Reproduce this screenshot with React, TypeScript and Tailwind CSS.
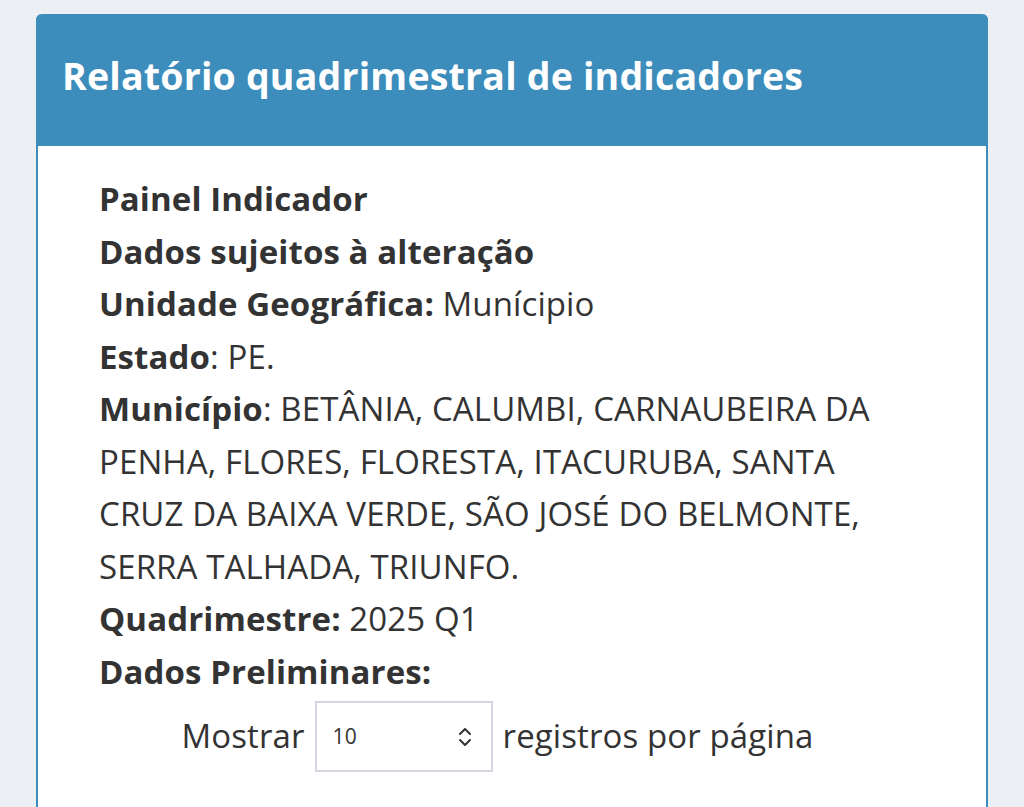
export default function App() {
  return (
    <div className="min-h-[807px] bg-[#ecf0f5] pt-[14px] pl-[36px] pr-[36px]" style={{ fontFamily: '"Open Sans", "Liberation Sans", sans-serif' }}>
      <div className="rounded-t-[6px] border-x-2 border-[#3c8dbc] bg-white">
        <div className="h-[132px] bg-[#3c8dbc] flex items-center px-[26px] -mx-[2px] rounded-t-[6px]">
          <h1 className="text-white text-[37.5px] font-bold leading-none pb-[8px] tracking-[0.2px]">Relatório quadrimestral de indicadores</h1>
        </div>
        <div className="pl-[61px] pr-[72px] pt-[27px] pb-[40px] text-[#333] text-[33px] leading-[52.5px] tracking-[0.1px]">
          <div className="font-bold">Painel Indicador</div>
          <div className="font-bold">Dados sujeitos à alteração</div>
          <div><span className="font-bold">Unidade Geográfica:</span> Munícipio</div>
          <div><span className="font-bold">Estado</span>: PE.</div>
          <div>
            <span className="font-bold">Município</span>: BETÂNIA, CALUMBI, CARNAUBEIRA DA PENHA, FLORES, FLORESTA, ITACURUBA, SANTA CRUZ DA BAIXA VERDE, SÃO JOSÉ DO BELMONTE, SERRA TALHADA, TRIUNFO.
          </div>
          <div><span className="font-bold">Quadrimestre:</span> 2025 Q1</div>
          <div className="font-bold">Dados Preliminares:</div>
          <div className="flex items-center justify-center gap-[10px] mt-[3px] -ml-[18px]">
            <span>Mostrar</span>
            <div className="w-[178px] h-[71px] border-2 border-[#d2d6de] flex items-center justify-between pl-[16px] pr-[18px]">
              <span className="text-[21px] leading-none">10</span>
              <svg width="16" height="24" viewBox="0 0 16 24" fill="none" stroke="#333" strokeWidth="2" strokeLinecap="round" strokeLinejoin="round">
                <path d="M3 9l5-5 5 5" />
                <path d="M3 15l5 5 5-5" />
              </svg>
            </div>
            <span>registros por página</span>
          </div>
        </div>
      </div>
    </div>
  )
}
